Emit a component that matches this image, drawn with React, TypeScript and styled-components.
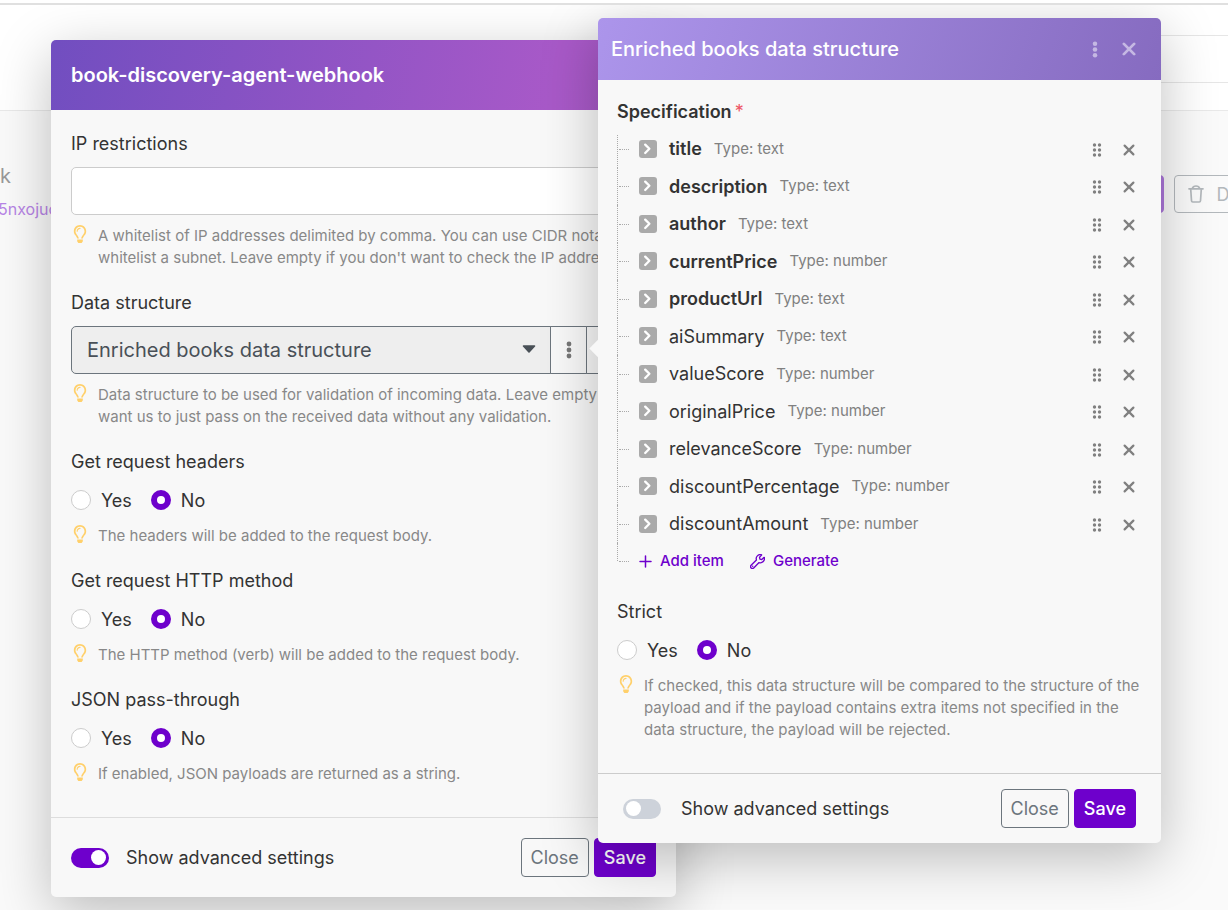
import React, { useId, useState } from "react";
import styled, { createGlobalStyle } from "styled-components";
import { FaRegLightbulb } from "react-icons/fa";

const GlobalStyle = createGlobalStyle`
  *, *::before, *::after { box-sizing: border-box; }
  body { margin: 0; background: #fff; }
  body, button, input, select {
    font-family: Inter, "Liberation Sans", sans-serif;
    color: #333;
  }
`;

const ACCENT = "#6e00cc";

/* ---------- page behind the dialogs ---------- */

const Page = styled.div`
  position: relative;
  min-height: 100vh;
  display: flex;
  flex-direction: column;
  overflow: hidden;
`;

const TopBar = styled.div`
  position: relative;
  z-index: 3;
  height: 5px;
  background: #fff;
  border-bottom: 2px solid #e0e0e0;
`;

const PageHead = styled.header`
  display: flex;
  justify-content: flex-end;
  border-bottom: 1px solid #e9e9e9;
`;

const SideTabs = styled.div`
  width: 40%;
  padding: 30px 0 27px;
`;

const SideTab = styled.div`
  height: 48px;
  border: 1px solid #e6e6e6;
  border-width: 1px 0;
`;

const PageBody = styled.main`
  flex: 1;
  background: #fafafa;
`;

const HookRow = styled.div`
  display: flex;
  justify-content: space-between;
  padding-top: 50px;
  margin: 0 -57px 0 -2px;
`;

const HookName = styled.div`
  padding-left: 2px;
  font-size: 20px;
  line-height: 30px;
  color: #999;
`;

const HookLink = styled.a`
  display: block;
  padding-top: 6px;
  font-size: 16px;
  line-height: 24px;
  color: #b785e6;
  text-decoration: none;
`;

const HookActions = styled.div`
  display: flex;
  gap: 10px;
  padding-top: 14px;
`;

const FadedButton = styled.button<{ $primary?: boolean }>`
  display: flex;
  align-items: center;
  gap: 12px;
  height: 38px;
  min-width: 91px;
  padding: 0 13px;
  border: 1px solid ${(p) => (p.$primary ? "#ac76da" : "#b3b8bc")};
  border-radius: 4px;
  background: ${(p) => (p.$primary ? "#ac76da" : "transparent")};
  color: #b3b8bc;
  font-size: 18px;
`;

/* ---------- dialogs ---------- */

const Dialog = styled.section<{ $level: number }>`
  position: absolute;
  z-index: ${(p) => p.$level};
  display: flex;
  flex-direction: column;
  background: #f8f8f8;
  border-radius: 5px;
  box-shadow: 0 15px 55px rgba(0, 0, 0, 0.25);
`;

const HookDialog = styled(Dialog)`
  top: 40px;
  left: 51px;
  width: 625px;
`;

const StructureDialog = styled(Dialog)`
  top: 18px;
  left: 598px;
  width: 563px;
`;

const Pointer = styled.span`
  position: absolute;
  top: 324px;
  left: -6px;
  width: 13px;
  height: 13px;
  background: #f8f8f8;
  transform: rotate(45deg);
`;

const HookHeader = styled.header`
  height: 70px;
  padding: 0 20px;
  display: flex;
  align-items: center;
  border-radius: 5px 5px 0 0;
  background: linear-gradient(100deg, #714ec0 0%, #a859c8 80%, #aa5ac8 100%);
`;

const StructureHeader = styled.header`
  height: 62px;
  padding: 0 20px 0 13px;
  display: flex;
  align-items: center;
  gap: 10px;
  border-radius: 5px 5px 0 0;
  background: linear-gradient(110deg, #ac95eb 0%, #866bc0 100%);
`;

const Title = styled.h2<{ $weight: number }>`
  flex: 1;
  margin: 0;
  font-size: 20px;
  line-height: 30px;
  font-weight: ${(p) => p.$weight};
  color: #fff;
`;

const IconButton = styled.button<{ $tone: string }>`
  width: 24px;
  height: 24px;
  padding: 0;
  border: 0;
  background: none;
  display: flex;
  align-items: center;
  justify-content: center;
  color: ${(p) => p.$tone};
`;

const HookBody = styled.div`
  display: flex;
  flex-direction: column;
  gap: 20px;
  padding: 20px 20px 32px;
`;

const StructureBody = styled.div`
  display: flex;
  flex-direction: column;
  gap: 18px;
  padding: 18px 20px 32px 19px;
`;

const Field = styled.div`
  display: flex;
  flex-direction: column;
  gap: 10px;
`;

const TreeField = styled.div`
  display: flex;
  flex-direction: column;
  gap: 5px;
`;

const Label = styled.label<{ $bold?: boolean }>`
  font-size: 18px;
  line-height: 27px;
  font-weight: ${(p) => (p.$bold ? 600 : 400)};
`;

const Required = styled.span`
  padding-left: 3px;
  font-weight: 400;
  color: #ee5566;
`;

const TextInput = styled.input`
  width: 100%;
  height: 48px;
  padding: 0 16px;
  border: 1px solid #ccc;
  border-radius: 5px;
  background: #fff;
  font-size: 20px;
`;

const HelpRow = styled.div`
  display: flex;
  gap: 11px;
  padding-left: 2px;
`;

const Bulb = styled(FaRegLightbulb)`
  flex: none;
  width: 14px;
  height: 18px;
  color: #ffd06b;
`;

const HelpText = styled.p`
  margin: 0;
  font-size: 15px;
  line-height: 22px;
  color: #888;
`;

const SelectGroup = styled.div`
  display: flex;
  height: 48px;
`;

const SelectWrap = styled.div`
  position: relative;
  flex: 1;
`;

const Select = styled.select`
  appearance: none;
  width: 100%;
  height: 100%;
  padding: 0 40px 0 15px;
  border: 1px solid #6c757d;
  border-radius: 5px 0 0 5px;
  background: #eee;
  color: #495057;
  font-size: 20px;
`;

const Caret = styled.svg`
  position: absolute;
  top: 19px;
  right: 15px;
  pointer-events: none;
`;

const GroupButton = styled.button<{ $width: number }>`
  display: flex;
  align-items: center;
  justify-content: center;
  width: ${(p) => p.$width}px;
  margin-left: -1px;
  padding: 0;
  border: 1px solid #6c757d;
  background: #f8f8f8;
  color: #777;
  font-size: 18px;

  &:last-child {
    border-radius: 0 5px 5px 0;
  }
`;

const RadioGroup = styled.div`
  display: flex;
  align-items: center;
  gap: 19px;
  height: 30px;
`;

const RadioLabel = styled.label`
  display: flex;
  align-items: center;
  gap: 10px;
  font-size: 18px;
  line-height: 27px;
`;

const Radio = styled.input`
  appearance: none;
  width: 20px;
  height: 20px;
  margin: 0;
  border: 1px solid #ccc;
  border-radius: 50%;
  background: #fff;

  &:checked {
    border: 6px solid ${ACCENT};
  }
`;

const HookFooter = styled.footer`
  display: flex;
  align-items: center;
  height: 80px;
  padding: 0 20px;
  border-top: 1px solid #ddd;
`;

const StructureFooter = styled.footer`
  display: flex;
  align-items: center;
  height: 70px;
  padding: 0 25px;
  border-top: 1px solid #ccc;
`;

const SwitchLabel = styled.label<{ $gap: number }>`
  flex: 1;
  display: flex;
  align-items: center;
  gap: ${(p) => p.$gap}px;
  font-size: 18px;
  line-height: 27px;
`;

const Switch = styled.input`
  appearance: none;
  width: 38px;
  height: 20px;
  margin: 0;
  padding: 2px 3px;
  display: flex;
  align-items: center;
  border-radius: 10px;
  background: #cdd2da;

  &::before {
    content: "";
    width: 15px;
    height: 15px;
    border-radius: 50%;
    background: #fff;
  }

  &:checked {
    justify-content: flex-end;
    background: ${ACCENT};
  }
`;

const FooterButtons = styled.div`
  display: flex;
  gap: 5px;
`;

const Button = styled.button<{ $primary?: boolean }>`
  height: 39px;
  padding: 0 9px;
  border: 1px solid ${(p) => (p.$primary ? ACCENT : "#6c757d")};
  border-radius: 4px;
  background: ${(p) => (p.$primary ? ACCENT : "transparent")};
  color: ${(p) => (p.$primary ? "#fff" : "#6c757d")};
  font-size: 18px;
  font-weight: ${(p) => (p.$primary ? 500 : 400)};
`;

/* ---------- specification tree ---------- */

const Tree = styled.ul`
  display: grid;
  grid-auto-rows: 1fr;
  height: 450px;
  margin: 0;
  padding: 0;
  list-style: none;
`;

const Branch = styled.li`
  position: relative;
  display: flex;
  align-items: center;
  padding-left: 22px;

  &::before {
    content: "";
    position: absolute;
    top: 0;
    bottom: 0;
    left: 0;
    border-left: 1px dotted #aaa;
  }

  &::after {
    content: "";
    position: absolute;
    top: 50%;
    left: 2px;
    width: 10px;
    border-top: 1px dotted #aaa;
  }

  &:first-child::before {
    top: 5px;
  }

  &:last-child::before {
    bottom: 50%;
  }
`;

const Expand = styled.button`
  width: 18px;
  height: 18px;
  padding: 0;
  display: flex;
  align-items: center;
  justify-content: center;
  border: 0;
  border-radius: 3px;
  background: #aaa;
`;

const ItemName = styled.span<{ $bold: boolean }>`
  padding-left: 12px;
  font-size: 18px;
  line-height: 27px;
  font-weight: ${(p) => (p.$bold ? 600 : 400)};
`;

const ItemType = styled.span`
  flex: 1;
  padding-left: 12px;
  font-size: 15px;
  line-height: 22px;
  color: #808080;
`;

const ItemTools = styled.div`
  display: flex;
  gap: 8px;
  padding-top: 2px;
`;

const TextButton = styled.button`
  display: flex;
  align-items: center;
  gap: 8px;
  margin-right: 26px;
  padding: 0;
  border: 0;
  background: none;
  color: ${ACCENT};
  font-size: 15px;
  line-height: 22px;
  font-weight: 500;
`;

/* ---------- icons ---------- */

const Dots = ({ size = 18 }: { size?: number }) => (
  <svg width="6" height={size} viewBox="0 0 6 18" fill="currentColor" aria-hidden>
    <circle cx="3" cy="3" r="2.4" />
    <circle cx="3" cy="9" r="2.4" />
    <circle cx="3" cy="15" r="2.4" />
  </svg>
);

const Grip = () => (
  <svg width="10" height="14" viewBox="0 0 10 14" fill="currentColor" aria-hidden>
    {[2, 7, 12].map((y) => (
      <React.Fragment key={y}>
        <circle cx="2.5" cy={y} r="1.7" />
        <circle cx="7.5" cy={y} r="1.7" />
      </React.Fragment>
    ))}
  </svg>
);

const Cross = ({ size, weight }: { size: number; weight: number }) => (
  <svg width={size} height={size} viewBox="0 0 12 12" aria-hidden>
    <path d="M1.6 1.6 10.4 10.4M10.4 1.6 1.6 10.4" stroke="currentColor" strokeWidth={weight} strokeLinecap="round" />
  </svg>
);

const Chevron = () => (
  <svg width="18" height="18" viewBox="0 0 18 18" fill="none" aria-hidden>
    <path d="M6.2 4.6 10.4 8.8 6.2 13" stroke="#fff" strokeWidth="2.3" strokeLinecap="round" strokeLinejoin="round" />
  </svg>
);

const Plus = () => (
  <svg width="13" height="13" viewBox="0 0 13 13" aria-hidden>
    <path d="M6.5 1v11M1 6.5h11" stroke="currentColor" strokeWidth="1.5" strokeLinecap="round" />
  </svg>
);

const Wrench = () => (
  <svg width="15" height="15" viewBox="0 0 512 512" fill="none" aria-hidden>
    <path
      d="M487 121c-1-7-9-9-14-4l-71 71-64-14-14-64 71-71c5-5 3-13-4-14-53-15-104 2-139 38-38 39-49 93-33 142L38 386c-25 25-25 65 0 89s65 24 89 0l182-182c49 16 103 4 141-34 37-37 51-88 37-138z"
      stroke="currentColor"
      strokeWidth="46"
      strokeLinejoin="round"
    />
    <circle cx="92" cy="420" r="26" fill="currentColor" />
  </svg>
);

const Trash = () => (
  <svg width="16" height="18" viewBox="0 0 16 18" fill="none" stroke="currentColor" strokeWidth="1.7" strokeLinecap="round" strokeLinejoin="round" aria-hidden>
    <path d="M1 3.8h14M4.3 3.6C4.8 1.9 5.8 1 8 1s3.2.9 3.7 2.6M2.7 4l.8 11.8q.1 1.2 1.3 1.2h6.400q1.2 0 1.3-1.2L13.300 4" />
  </svg>
);

/* ---------- composed parts ---------- */

const Help = ({ children }: { children: React.ReactNode }) => (
  <HelpRow>
    <Bulb aria-hidden />
    <HelpText>{children}</HelpText>
  </HelpRow>
);

const YesNo = ({ label, help }: { label: string; help: string }) => {
  const id = useId();
  const [value, setValue] = useState("No");
  return (
    <Field role="radiogroup" aria-labelledby={id}>
      <Label as="span" id={id}>
        {label}
      </Label>
      <RadioGroup>
        {["Yes", "No"].map((option) => (
          <RadioLabel key={option}>
            <Radio type="radio" name={id + "choice"} checked={value === option} onChange={() => setValue(option)} />
            {option}
          </RadioLabel>
        ))}
      </RadioGroup>
      <Help>{help}</Help>
    </Field>
  );
};

const AdvancedSwitch = ({ on, gap }: { on: boolean; gap: number }) => (
  <SwitchLabel $gap={gap}>
    <Switch type="checkbox" role="switch" defaultChecked={on} />
    Show advanced settings
  </SwitchLabel>
);

const CloseSave = () => (
  <FooterButtons>
    <Button type="button">Close</Button>
    <Button type="button" $primary>
      Save
    </Button>
  </FooterButtons>
);

const ITEMS = [
  { name: "title", type: "text", required: true },
  { name: "description", type: "text", required: true },
  { name: "author", type: "text", required: true },
  { name: "currentPrice", type: "number", required: true },
  { name: "productUrl", type: "text", required: true },
  { name: "aiSummary", type: "text", required: false },
  { name: "valueScore", type: "number", required: false },
  { name: "originalPrice", type: "number", required: false },
  { name: "relevanceScore", type: "number", required: false },
  { name: "discountPercentage", type: "number", required: false },
  { name: "discountAmount", type: "number", required: false },
];

export default function App() {
  return (
    <Page>
      <GlobalStyle />
      <TopBar />
      <PageHead>
        <SideTabs>
          <SideTab />
        </SideTabs>
      </PageHead>
      <PageBody>
        <HookRow>
          <div>
            <HookName>k</HookName>
            <HookLink href="#hook">5nxojuc</HookLink>
          </div>
          <HookActions>
            <FadedButton type="button" $primary aria-label="Edit" />
            <FadedButton type="button">
              <Trash />
              Delete
            </FadedButton>
          </HookActions>
        </HookRow>
      </PageBody>

      <HookDialog $level={1} role="dialog" aria-label="book-discovery-agent-webhook">
        <HookHeader>
          <Title $weight={600}>book-discovery-agent-webhook</Title>
        </HookHeader>
        <HookBody>
          <Field>
            <Label htmlFor="ip">IP restrictions</Label>
            <TextInput id="ip" type="text" />
            <Help>
              A whitelist of IP addresses delimited by comma. You can use CIDR notation to whitelist a subnet. Leave
              empty if you don't want to check the IP address.
            </Help>
          </Field>
          <Field>
            <Label htmlFor="structure">Data structure</Label>
            <SelectGroup>
              <SelectWrap>
                <Select id="structure">
                  <option>Enriched books data structure</option>
                </Select>
                <Caret width="14" height="9" viewBox="0 0 14 9" aria-hidden>
                  <path d="M1.5 1h11L7 7z" fill="#495057" stroke="#495057" strokeWidth="1.6" strokeLinejoin="round" />
                </Caret>
              </SelectWrap>
              <GroupButton type="button" $width={37} aria-label="More">
                <Dots />
              </GroupButton>
              <GroupButton type="button" $width={70}>
                Edit
              </GroupButton>
            </SelectGroup>
            <Help>
              Data structure to be used for validation of incoming data. Leave empty if you want us to just pass on the
              received data without any validation.
            </Help>
          </Field>
          <YesNo label="Get request headers" help="The headers will be added to the request body." />
          <YesNo label="Get request HTTP method" help="The HTTP method (verb) will be added to the request body." />
          <YesNo label="JSON pass-through" help="If enabled, JSON payloads are returned as a string." />
        </HookBody>
        <HookFooter>
          <AdvancedSwitch on gap={17} />
          <CloseSave />
        </HookFooter>
      </HookDialog>

      <StructureDialog $level={2} role="dialog" aria-label="Enriched books data structure">
        <Pointer />
        <StructureHeader>
          <Title $weight={500}>Enriched books data structure</Title>
          <IconButton type="button" $tone="#c5b8e3" aria-label="More">
            <Dots size={17} />
          </IconButton>
          <IconButton type="button" $tone="#c5b8e3" aria-label="Close dialog">
            <Cross size={14} weight={2.4} />
          </IconButton>
        </StructureHeader>
        <StructureBody>
          <TreeField>
            <Label as="span" $bold>
              Specification
              <Required>*</Required>
            </Label>
            <Tree>
              {ITEMS.map((item) => (
                <Branch key={item.name}>
                  <Expand type="button" aria-label={"Expand " + item.name}>
                    <Chevron />
                  </Expand>
                  <ItemName $bold={item.required}>{item.name}</ItemName>
                  <ItemType>Type: {item.type}</ItemType>
                  <ItemTools>
                    <IconButton type="button" $tone="#808080" aria-label={"Move " + item.name}>
                      <Grip />
                    </IconButton>
                    <IconButton type="button" $tone="#808080" aria-label={"Remove " + item.name}>
                      <Cross size={12} weight={2.2} />
                    </IconButton>
                  </ItemTools>
                </Branch>
              ))}
              <Branch>
                <TextButton type="button">
                  <Plus />
                  Add item
                </TextButton>
                <TextButton type="button">
                  <Wrench />
                  Generate
                </TextButton>
              </Branch>
            </Tree>
          </TreeField>
          <YesNo
            label="Strict"
            help="If checked, this data structure will be compared to the structure of the payload and if the payload contains extra items not specified in the data structure, the payload will be rejected."
          />
        </StructureBody>
        <StructureFooter>
          <AdvancedSwitch on={false} gap={20} />
          <CloseSave />
        </StructureFooter>
      </StructureDialog>
    </Page>
  );
}
